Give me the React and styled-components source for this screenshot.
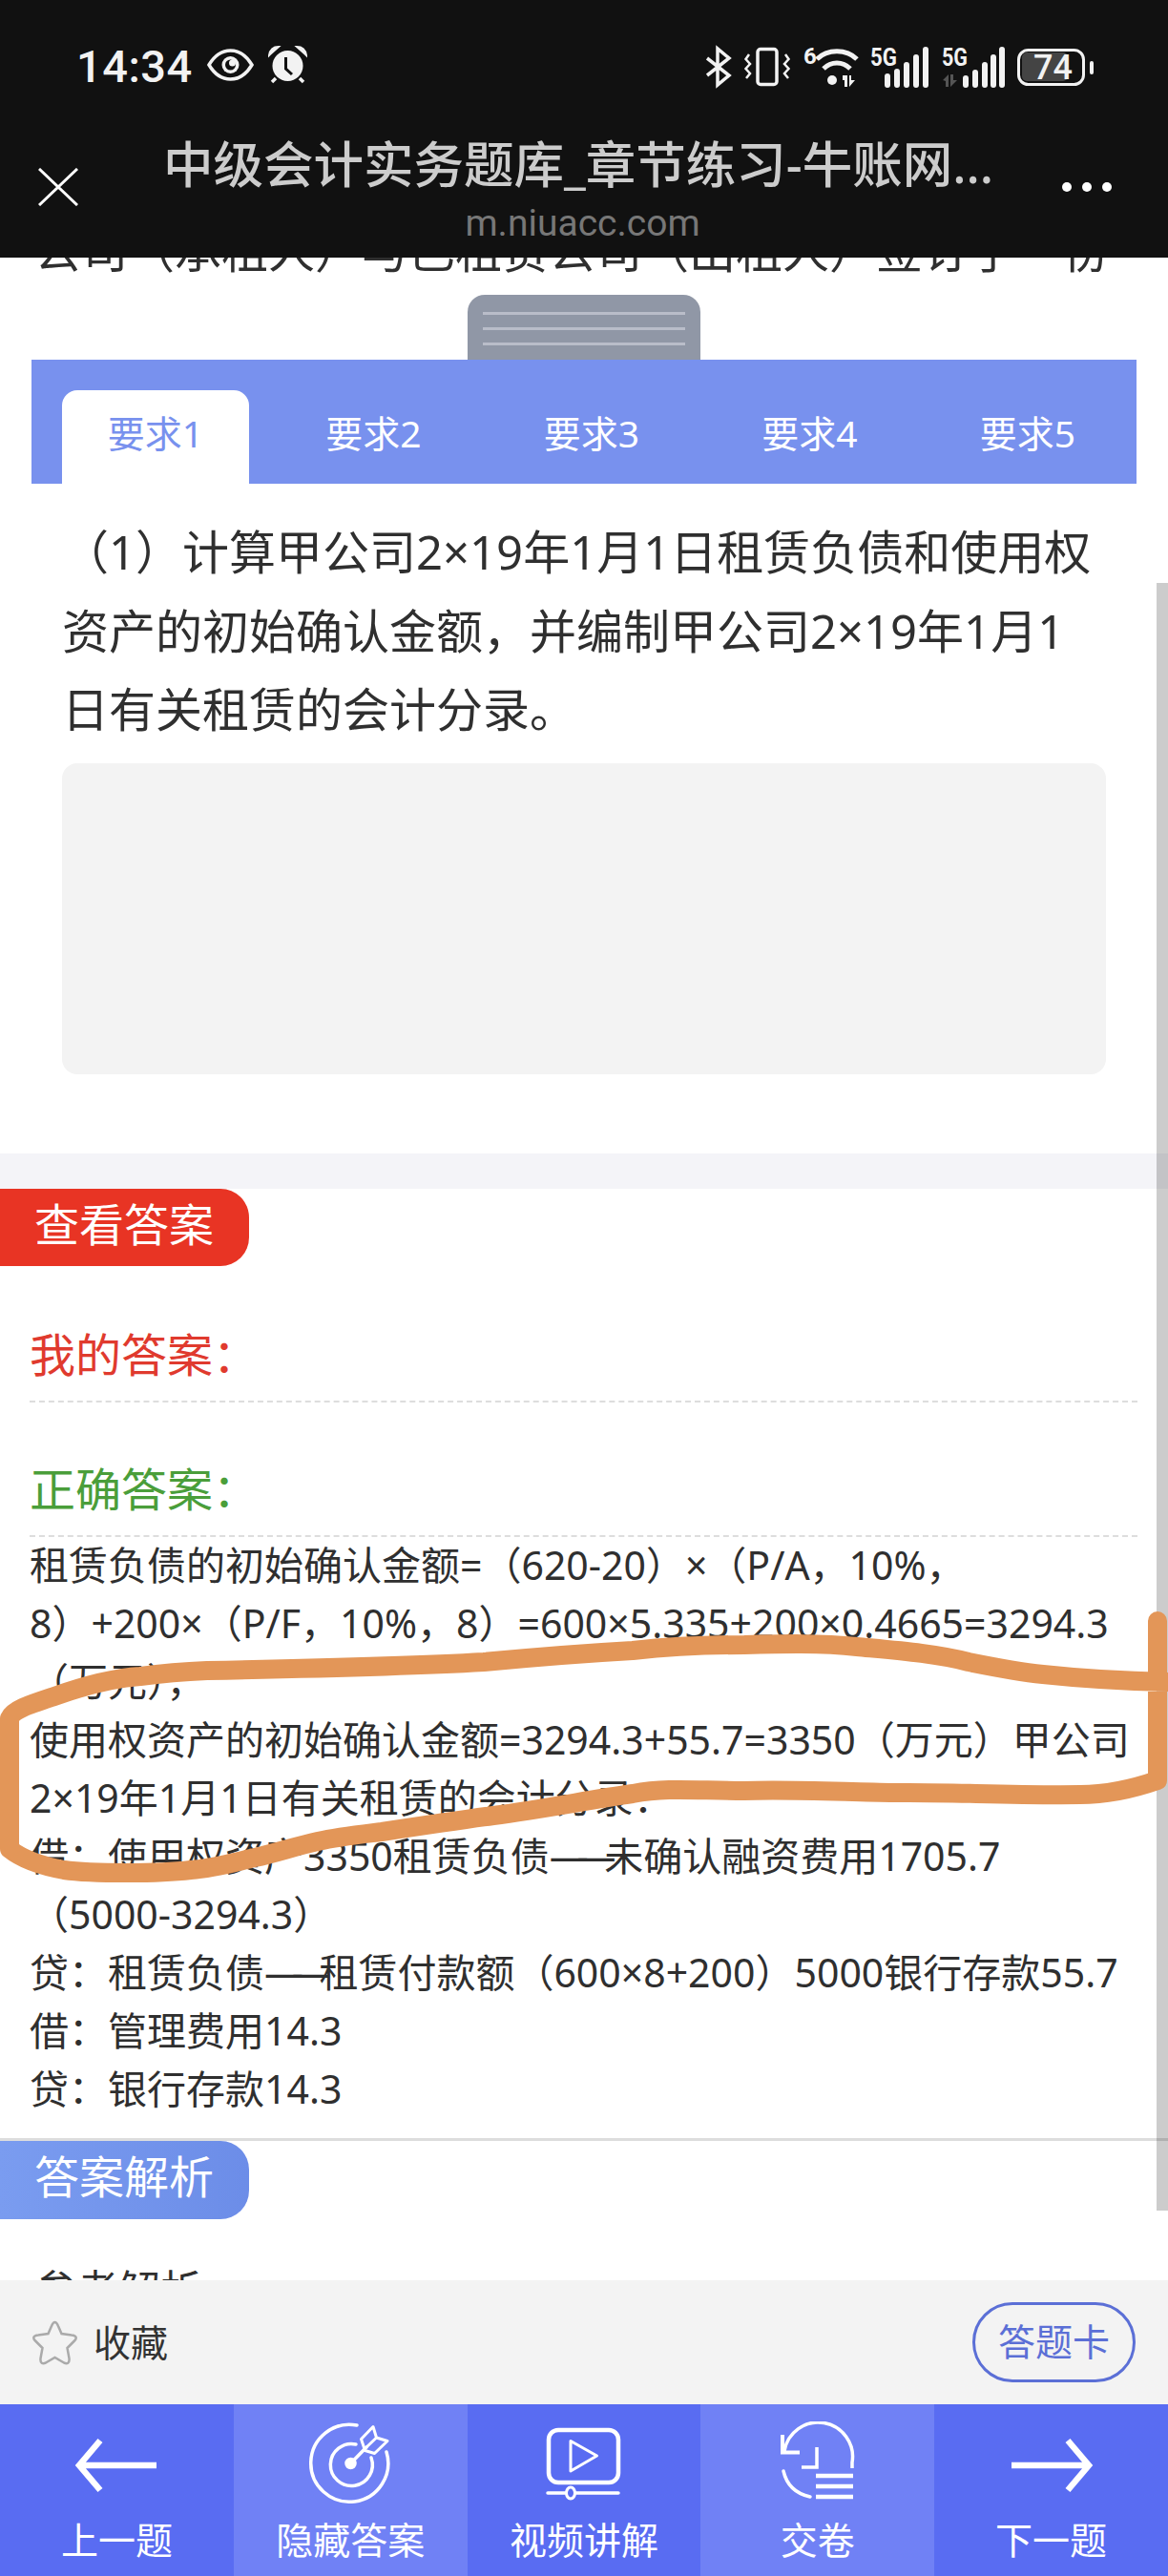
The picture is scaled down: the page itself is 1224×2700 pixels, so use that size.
import React from 'react';
import styled, { createGlobalStyle } from 'styled-components';

const GlobalStyle = createGlobalStyle`
  html, body {
    margin: 0;
    padding: 0;
    background: #fff;
  }
  * {
    box-sizing: border-box;
  }
`;

const Page = styled.div`
  position: relative;
  width: 1224px;
  height: 2700px;
  overflow: hidden;
  display: flex;
  flex-direction: column;
  font-family: 'Noto Sans', 'Noto Sans CJK SC', sans-serif;
  color: #2f2f2f;
  background: #fff;
`;

const Header = styled.header`
  height: 270px;
  flex: none;
  background: #111;
`;
const StatusBar = styled.div`
  height: 105px;
  padding: 48px 78px 0 80px;
  display: flex;
  align-items: flex-start;
  color: #f2f2f2;
`;
const Clock = styled.div`
  font-family: Roboto, sans-serif;
  font-size: 47px;
  font-weight: 500;
  line-height: 44px;
  letter-spacing: 0.5px;
  margin-right: 15px;
`;
const StatusLeft = styled.div`
  display: flex;
  align-items: center;
  gap: 15px;
`;
const StatusRight = styled.div`
  display: flex;
  gap: 14px;
  margin-left: auto;
  svg {
    display: block;
    overflow: visible;
  }
`;
const TitleBar = styled.div`
  display: flex;
  height: 165px;
`;
const CloseBtn = styled.div`
  width: 105px;
  padding: 71px 0 0 40px;
  flex: none;
`;
const TitleBlock = styled.div`
  flex: 1;
  padding-top: 36px;
  text-align: center;
  white-space: nowrap;
`;
const Title = styled.div`
  margin-right: 6px;
  font-size: 52.5px;
  font-weight: 500;
  line-height: 62px;
  color: #ccc;
`;
const Subtitle = styled.div`
  margin-left: 3px;
  font-family: Roboto, sans-serif;
  font-size: 39px;
  line-height: 62px;
  color: #777;
`;
const MoreBtn = styled.div`
  width: 111px;
  padding: 86px 59px 0 0;
  flex: none;
  display: flex;
  justify-content: space-between;
  align-items: flex-start;
`;
const Dot = styled.span`
  width: 10px;
  height: 10px;
  border-radius: 50%;
  background: #fff;
`;

const Scroller = styled.main`
  flex: 1;
  min-height: 0;
  overflow: hidden;
`;
const ClippedLine = styled.div`
  height: 39px;
  overflow: hidden;
  padding-left: 36px;
  font-size: 49px;
  line-height: 82px;
  white-space: nowrap;
  & > div {
    margin-top: -49px;
  }
`;
const Handle = styled.div`
  width: 244px;
  height: 68px;
  margin: 0 auto;
  padding: 18px 16px 0;
  border-radius: 18px 18px 0 0;
  background: #9097a6;
  display: flex;
  flex-direction: column;
  gap: 13px;
`;
const HandleLine = styled.span`
  height: 3px;
  background: #b9bdc9;
`;
const TabBar = styled.div`
  height: 130px;
  margin: 0 33px;
  padding: 32px 0 0 32px;
  display: flex;
  gap: 32.5px;
  background: #7891ee;
`;
const Tab = styled.div`
  width: 196px;
  height: 98px;
  padding-top: 4px;
  text-align: center;
  font-size: 39px;
  line-height: 82px;
  border-radius: ${(p) => (p.$active ? '16px 16px 0 0' : '0')};
  background: ${(p) => (p.$active ? '#fff' : 'transparent')};
  color: ${(p) => (p.$active ? '#7891ee' : '#fff')};
`;
const Question = styled.section`
  padding: 30px 65px 0;
  height: 702px;
`;
const QuestionText = styled.div`
  font-size: 49px;
  line-height: 82.5px;
  white-space: nowrap;
  height: 263px;
`;
const AnswerBox = styled.div`
  height: 326px;
  width: 1094px;
  border-radius: 16px;
  background: #f3f3f3;
`;
const Band = styled.div`
  height: 37px;
  background: #f4f4f8;
`;
const TagLabel = styled.div`
  width: 261px;
  height: ${(p) => p.$height}px;
  padding-left: 36px;
  border-radius: 0 30px 30px 0;
  font-size: 47px;
  line-height: ${(p) => p.$height - 7}px;
  color: #fff;
  background: ${(p) => p.$bg};
`;
const ResultHead = styled.div`
  margin: ${(p) => p.$top}px 32px 0 31px;
  height: 83px;
  border-bottom: 2px dashed #ddd;
  font-size: 48px;
  line-height: 66px;
  color: ${(p) => p.$color};
`;
const AnswerLines = styled.div`
  margin-top: -1px;
  padding-left: 31px;
  height: 631px;
  font-size: 41px;
  line-height: 61px;
  white-space: nowrap;
`;
const AnswerLine = styled.div``;
const LongDash = styled.span`
  letter-spacing: -0.3em;
`;
const Rule = styled.div`
  height: 3px;
  background: #ddd;
`;
const Explain = styled.div`
  margin-top: 44px;
  padding-left: 36px;
  font-size: 44px;
  line-height: 61px;
`;

const ActionBar = styled.div`
  height: 130px;
  flex: none;
  padding: 0 34px 0 33px;
  display: flex;
  align-items: center;
  background: #f3f3f3;
  position: relative;
  z-index: 3;
`;
const FavLabel = styled.span`
  margin: 0 0 4px 16px;
  font-size: 39px;
  color: #333;
`;
const CardBtn = styled.div`
  width: 171px;
  height: 84px;
  margin-left: auto;
  border: 3px solid #5b6fd6;
  border-radius: 42px;
  text-align: center;
  font-size: 39px;
  line-height: 76px;
  color: #5b6fd6;
`;
const NavBar = styled.nav`
  height: 180px;
  flex: none;
  display: grid;
  grid-template-columns: repeat(5, 1fr);
  position: relative;
  z-index: 3;
`;
const NavItem = styled.div`
  padding-top: 18px;
  display: flex;
  flex-direction: column;
  align-items: center;
  background: ${(p) => (p.$alt ? '#7081f5' : '#596cf2')};
  color: #fff;
  font-size: 39px;
  line-height: 48px;
  svg {
    display: block;
    margin-bottom: 10px;
  }
`;

const Scrollbar = styled.div`
  position: absolute;
  top: 611px;
  right: 0;
  width: 12px;
  height: 1706px;
  background: rgba(0, 0, 0, 0.2);
`;
const Scribble = styled.svg`
  position: absolute;
  top: 0;
  left: 0;
  pointer-events: none;
  z-index: 2;
`;

const tabs = ['要求1', '要求2', '要求3', '要求4', '要求5'];

const answer = [
  '租赁负债的初始确认金额=（620-20）×（P/A，10%，',
  '8）+200×（P/F，10%，8）=600×5.335+200×0.4665=3294.3',
  '（万元），',
  '使用权资产的初始确认金额=3294.3+55.7=3350（万元）甲公司',
  '2×19年1月1日有关租赁的会计分录：',
  '借：使用权资产3350租赁负债——未确认融资费用1705.7',
  '（5000-3294.3）',
  '贷：租赁负债——租赁付款额（600×8+200）5000银行存款55.7',
  '借：管理费用14.3',
  '贷：银行存款14.3',
];

const withDash = (line) => {
  const parts = line.split('——');
  if (parts.length === 1) return line;
  return (
    <>
      {parts[0]}
      <LongDash>——</LongDash>
      {parts[1]}
    </>
  );
};

const EyeIcon = () => (
  <svg width="49" height="34" viewBox="0 0 49 34" fill="none">
    <path d="M2 17C8 7 15 2 24.500 2S41 7 47 17C41 27 34 32 24.500 32S8 27 2 17Z" stroke="#f2f2f2" strokeWidth="3.500" />
    <circle cx="24.500" cy="17" r="9" fill="#f2f2f2" />
    <circle cx="24.500" cy="17" r="5.500" fill="#111" />
    <circle cx="26.500" cy="15" r="3.500" fill="#f2f2f2" />
  </svg>
);

const AlarmIcon = () => (
  <svg width="41" height="40" viewBox="0 0 41 40" fill="none">
    <circle cx="20.500" cy="21" r="16" fill="#f2f2f2" />
    <path d="M1 10C2 4 6 1 11 1L2 9ZM40 10C39 4 35 1 30 1L39 9Z" fill="#f2f2f2" stroke="#f2f2f2" strokeWidth="2" />
    <path d="M8 34L4 38M33 34L37 38" stroke="#f2f2f2" strokeWidth="3.500" />
    <path d="M18.500 12V24L25 30" stroke="#111" strokeWidth="3" />
  </svg>
);

const StatusIcons = () => (
  <StatusRight>
    <svg width="27" height="44" viewBox="0 0 27 44" fill="none" stroke="#f2f2f2" strokeWidth="3.500">
      <path d="M2 13L25 31L13 41V3L25 13L2 31" />
    </svg>
    <svg width="48" height="44" viewBox="0 0 48 44" fill="none" stroke="#f2f2f2">
      <rect x="14" y="3.500" width="20" height="37" rx="3" strokeWidth="3.500" />
      <path d="M5 9L1.500 14L6 19L1.500 24L6 29L2 34M43 9L46.500 14L42 19L46.500 24L42 29L46 34" strokeWidth="2.500" />
    </svg>
    <svg width="56" height="44" viewBox="0 0 56 44" fill="none">
      <text x="0" y="19" fontFamily="Roboto" fontWeight="700" fontSize="24" fill="#f2f2f2">6</text>
      <path d="M14 14C25 3 45 3 56 14M21 24C29 16 41 16 49 24" stroke="#f2f2f2" strokeWidth="5" />
      <circle cx="30" cy="36" r="5" fill="#f2f2f2" />
      <path d="M41 31H46V43H43V36H41ZM48 31H50V36H54L48 43Z" fill="#f2f2f2" />
    </svg>
    <svg width="61" height="44" viewBox="0 0 61 44" fill="none">
      <text x="0" y="21" fontFamily="Roboto" fontWeight="700" fontSize="26" fill="#f2f2f2" textLength="28" lengthAdjust="spacingAndGlyphs">5G</text>
      <path d="M18 32V41M28 27V41M38 20V41M48 12V41M58 4V41" stroke="#f2f2f2" strokeWidth="6" strokeLinecap="round" />
    </svg>
    <svg width="65" height="44" viewBox="0 0 65 44" fill="none">
      <text x="0" y="21" fontFamily="Roboto" fontWeight="700" fontSize="26" fill="#f2f2f2" textLength="27" lengthAdjust="spacingAndGlyphs">5G</text>
      <path d="M1 36L7 30V43H4V37ZM9 30H12V36H16L9 43Z" fill="#555" />
      <path d="M25 34V41M35 28V41M45 20V41M54 12V41M63 4V41" stroke="#f2f2f2" strokeWidth="6" strokeLinecap="round" />
    </svg>
    <svg width="80" height="44" viewBox="0 0 80 44" fill="none">
      <rect x="5" y="7" width="48" height="30" rx="5" fill="#444" />
      <rect x="1.500" y="4.500" width="68" height="36" rx="10" stroke="#f2f2f2" strokeWidth="3" />
      <text x="17" y="35" fontFamily="Roboto" fontWeight="500" fontSize="36" fill="#f2f2f2">74</text>
      <rect x="76" y="16" width="4" height="14" rx="2" fill="#f2f2f2" />
    </svg>
  </StatusRight>
);

const CloseIcon = () => (
  <svg width="42" height="40" viewBox="0 0 42 40" stroke="#fff" strokeWidth="3">
    <path d="M1 1L41 39M41 1L1 39" />
  </svg>
);

const StarIcon = () => (
  <svg width="49" height="47" viewBox="0 0 49 47" fill="none" stroke="#aaa" strokeWidth="2.500">
    <path d="M24.500 2C26 2 27 3.500 28 6L31.500 14L42 15.500C47 16 48 18.500 45 21.500L37.500 29L39.500 40C40 45 37.500 46 34 44.500L24.500 39L15 44.500C11.500 46 9 45 9.500 40L11.500 29L4 21.500C1 18.500 2 16 7 15.500L17.500 14L21 6C22 3.500 23 2 24.500 2Z" />
  </svg>
);

const iconProps = { width: 90, height: 90, viewBox: '0 0 90 90', fill: 'none', stroke: '#fff' };

const PrevIcon = () => (
  <svg {...iconProps} strokeWidth="6.500">
    <path d="M87 46H7M28 20L6 46L28 72" />
  </svg>
);

const NextIcon = () => (
  <svg {...iconProps} strokeWidth="6.500">
    <path d="M3 46H83M62 20L84 46L62 72" />
  </svg>
);

const TargetIcon = () => (
  <svg {...iconProps} strokeWidth="3.500" strokeLinecap="round">
    <path d="M52 4A40.500 40.500 0 1 0 83 32" />
    <path d="M51 24A22 22 0 1 0 67 38" />
    <circle cx="45.500" cy="44" r="4.500" fill="#fff" />
    <path d="M45.500 44L62 27" />
    <path d="M69 5.500L72.500 17L84 20.500L70.500 33.500L60.500 30.500L56.500 18.500ZM62 27L72.500 17" strokeLinejoin="round" strokeWidth="3" />
  </svg>
);

const VideoIcon = () => (
  <svg {...iconProps} strokeWidth="4">
    <rect x="8" y="9" width="73" height="55" rx="10" strokeWidth="4.500" />
    <path d="M31 20.500L58.500 36L31 52Z" strokeWidth="3" strokeLinejoin="round" />
    <path d="M7 75H26M36 75H81" strokeWidth="3.500" strokeLinecap="round" />
    <ellipse cx="31" cy="75" rx="4.500" ry="6" strokeWidth="3" />
  </svg>
);

const SubmitIcon = () => (
  <svg {...iconProps} strokeWidth="3.500">
    <path d="M8 14V32.500H26" strokeWidth="4" />
    <path d="M10 31A36 36 0 0 1 81 43V49" />
    <path d="M9 52Q14 74 37 79" strokeLinecap="round" />
    <path d="M44 27V48H28" />
    <path d="M43 57H82M43 68H82M43 79H82" strokeWidth="4.500" />
  </svg>
);

const App = () => {
  return (
    <Page>
      <GlobalStyle />
      <Header>
        <StatusBar>
          <Clock>14:34</Clock>
          <StatusLeft>
            <EyeIcon />
            <AlarmIcon />
          </StatusLeft>
          <StatusIcons />
        </StatusBar>
        <TitleBar>
          <CloseBtn>
            <CloseIcon />
          </CloseBtn>
          <TitleBlock>
            <Title>中级会计实务题库_章节练习-牛账网...</Title>
            <Subtitle>m.niuacc.com</Subtitle>
          </TitleBlock>
          <MoreBtn>
            <Dot />
            <Dot />
            <Dot />
          </MoreBtn>
        </TitleBar>
      </Header>

      <Scroller>
        <ClippedLine>
          <div>公司（承租人）与已租赁公司（出租人）签订了一份</div>
        </ClippedLine>
        <Handle>
          <HandleLine />
          <HandleLine />
          <HandleLine />
        </Handle>
        <TabBar>
          {tabs.map((t, i) => (
            <Tab key={t} $active={i === 0}>
              {t}
            </Tab>
          ))}
        </TabBar>
        <Question>
          <QuestionText>
            （1）计算甲公司2×19年1月1日租赁负债和使用权
            <br />
            资产的初始确认金额，并编制甲公司2×19年1月1
            <br />
            日有关租赁的会计分录。
          </QuestionText>
          <AnswerBox />
        </Question>
        <Band />
        <TagLabel $height={81} $bg="#e83424">
          查看答案
        </TagLabel>
        <ResultHead $top={60} $color="#e03a2e">
          我的答案：
        </ResultHead>
        <ResultHead $top={58} $color="#4a9e3a">
          正确答案：
        </ResultHead>
        <AnswerLines>
          {answer.map((line) => (
            <AnswerLine key={line}>{withDash(line)}</AnswerLine>
          ))}
        </AnswerLines>
        <Rule />
        <TagLabel $height={82} $bg="linear-gradient(90deg, #7a9cf0, #6c8de8)">
          答案解析
        </TagLabel>
        <Explain>参考解析</Explain>
      </Scroller>

      <ActionBar>
        <StarIcon />
        <FavLabel>收藏</FavLabel>
        <CardBtn>答题卡</CardBtn>
      </ActionBar>
      <NavBar>
        <NavItem>
          <PrevIcon />
          上一题
        </NavItem>
        <NavItem $alt>
          <TargetIcon />
          隐藏答案
        </NavItem>
        <NavItem>
          <VideoIcon />
          视频讲解
        </NavItem>
        <NavItem $alt>
          <SubmitIcon />
          交卷
        </NavItem>
        <NavItem>
          <NextIcon />
          下一题
        </NavItem>
      </NavBar>

      <Scrollbar />
      {/* hand drawn marker stroke on the screenshot */}
      <Scribble width="1224" height="2700" viewBox="0 0 1224 2700" fill="none">
        <path
          d="M1213 1699V1866C1190 1874 1160 1881 1132 1881C1060 1882 990 1878 937 1879C880 1878 820 1875 780 1877C730 1877 700 1873 663 1880C620 1886 570 1896 517 1903C480 1908 440 1914 400 1920C375 1923 355 1925 333 1930C310 1935 290 1942 267 1947C245 1952 225 1958 200 1960C175 1963 155 1963 133 1963C110 1963 88 1963 67 1960C45 1956 25 1950 10 1938V1801C14 1792 30 1787 57 1778C85 1768 115 1759 147 1757C170 1754 195 1752 217 1751C320 1749 420 1747 507 1742C560 1737 610 1733 663 1730C700 1726 740 1724 780 1724C820 1723 860 1722 898 1726C940 1730 980 1733 1015 1742C1040 1747 1065 1752 1093 1755C1130 1759 1180 1762 1224 1763"
          stroke="#e39658"
          strokeWidth="20"
          strokeLinecap="round"
          strokeLinejoin="round"
        />
      </Scribble>
    </Page>
  );
};

export default App;
